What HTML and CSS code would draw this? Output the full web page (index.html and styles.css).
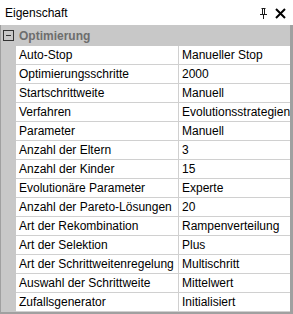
FILE: index.html
```html
<!DOCTYPE html>
<html lang="de">

<head>
  <meta charset="UTF-8">
  <meta name="viewport" content="width=device-width, initial-scale=1.0">
  <title>Eigenschaft</title>
  <link rel="stylesheet" href="styles.css">
</head>

<body>
  <div class="panel">
    <div class="titlebar">
      <span class="title">Eigenschaft</span>
      <span class="tools">
        <svg class="pin" width="7" height="11" viewBox="0 0 7 11">
          <path d="M1.5 0.5h4M2.5 0.5v6M4.5 0.5v6M0 6.5h7M3.5 6.5v4.5" stroke="#1a1a1a" stroke-width="1" fill="none" />
        </svg>
        <svg class="close" width="11" height="11" viewBox="0 0 11 11">
          <path d="M1 1l9 9M10 1l-9 9" stroke="#000" stroke-width="2" fill="none" />
        </svg>
      </span>
    </div>
    <div class="grid">
      <div class="category">
        <svg class="toggle" width="11" height="11" viewBox="0 0 11 11">
          <rect x="0.5" y="0.5" width="10" height="10" fill="none" stroke="#333" />
          <path d="M3 5.5h5" stroke="#333" />
        </svg>
        <span>Optimierung</span>
      </div>
      <div class="row"><div class="name">Auto-Stop</div><div class="value">Manueller Stop</div></div>
      <div class="row"><div class="name">Optimierungsschritte</div><div class="value">2000</div></div>
      <div class="row"><div class="name">Startschrittweite</div><div class="value">Manuell</div></div>
      <div class="row"><div class="name">Verfahren</div><div class="value">Evolutionsstrategien</div></div>
      <div class="row"><div class="name">Parameter</div><div class="value">Manuell</div></div>
      <div class="row"><div class="name">Anzahl der Eltern</div><div class="value">3</div></div>
      <div class="row"><div class="name">Anzahl der Kinder</div><div class="value">15</div></div>
      <div class="row"><div class="name">Evolutionäre Parameter</div><div class="value">Experte</div></div>
      <div class="row"><div class="name">Anzahl der Pareto-Lösungen</div><div class="value">20</div></div>
      <div class="row"><div class="name">Art der Rekombination</div><div class="value">Rampenverteilung</div></div>
      <div class="row"><div class="name">Art der Selektion</div><div class="value">Plus</div></div>
      <div class="row"><div class="name">Art der Schrittweitenregelung</div><div class="value">Multischritt</div></div>
      <div class="row"><div class="name">Auswahl der Schrittweite</div><div class="value">Mittelwert</div></div>
      <div class="row"><div class="name">Zufallsgenerator</div><div class="value">Initialisiert</div></div>
    </div>
  </div>
</body>

</html>
```

FILE: styles.css
```css
body {
  margin: 0;
  background: #fff;
  font-family: "Liberation Sans", Arial, sans-serif;
  font-size: 12px;
  color: #000;
}

.panel {
  width: 293px;
  height: 314px;
  overflow: hidden;
}

.titlebar {
  display: flex;
  align-items: center;
  justify-content: space-between;
  height: 25px;
  padding: 1px 7px 0 5px;
  box-sizing: border-box;
  background: #fff;
}

.tools {
  display: flex;
  align-items: center;
  gap: 8px;
}

.grid {
  border-left: 1px solid #a0a0a0;
  border-right: 3px solid #a0a0a0;
  border-bottom: 2px solid #a0a0a0;
  background: #c8c8c8;
}

.category {
  display: flex;
  align-items: center;
  height: 21px;
  padding-left: 2px;
  color: #6d6d6d;
  font-weight: bold;
}

.category .toggle {
  margin-right: 5px;
}

.row {
  display: flex;
  height: 18px;
  margin-left: 15px;
  border-bottom: 1px solid #d0d0d0;
  background: #fff;
  line-height: 18px;
  white-space: nowrap;
}

.row .name {
  width: 159px;
  padding-left: 3px;
  border-right: 1px solid #d0d0d0;
  overflow: hidden;
}

.row .value {
  flex: 1;
  padding-left: 3px;
  overflow: hidden;
}
```
